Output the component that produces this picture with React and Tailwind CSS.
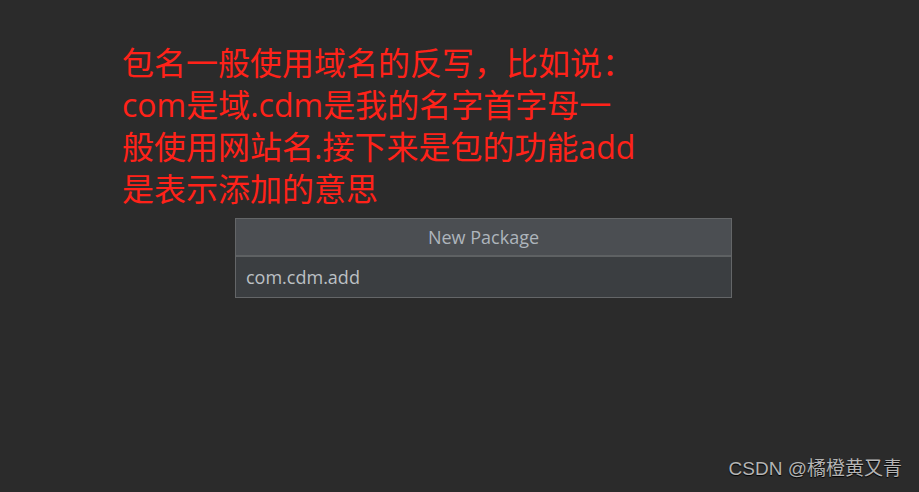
export default function App() {
  const cjk = { fontFamily: '"Open Sans", "Noto Sans CJK SC", sans-serif' };
  return (
    <div className="relative w-[919px] h-[492px] bg-[#2b2b2b] overflow-hidden" style={cjk}>
      <div className="pl-[122px] pt-[42px] text-[#ff2219] text-[32px] leading-[42px]">
        <div>包名一般使用域名的反写，比如说：</div>
        <div>com是域.cdm是我的名字首字母一</div>
        <div>般使用网站名.接下来是包的功能add</div>
        <div>是表示添加的意思</div>
      </div>
      <div className="ml-[235px] mt-[8px] w-[497px] border border-[#646668] flex flex-col">
        <div className="h-[38px] bg-[#4b4e52] border-b-2 border-[#5e6163] flex items-center justify-center text-[#aeb5bc] text-[18px]">
          New Package
        </div>
        <div className="h-[40px] bg-[#3b3e41] flex items-center pl-[10px] text-[#bcc0c4] text-[18px]">
          com.cdm.add
        </div>
      </div>
      <div
        className="absolute right-[17px] bottom-[9px] text-[#b4b4b4] text-[19px] [text-shadow:0_1px_1px_#000]"
        style={{ fontFamily: '"Liberation Sans", "Noto Sans CJK SC", sans-serif' }}
      >
        CSDN @橘橙黄又青
      </div>
    </div>
  );
}
